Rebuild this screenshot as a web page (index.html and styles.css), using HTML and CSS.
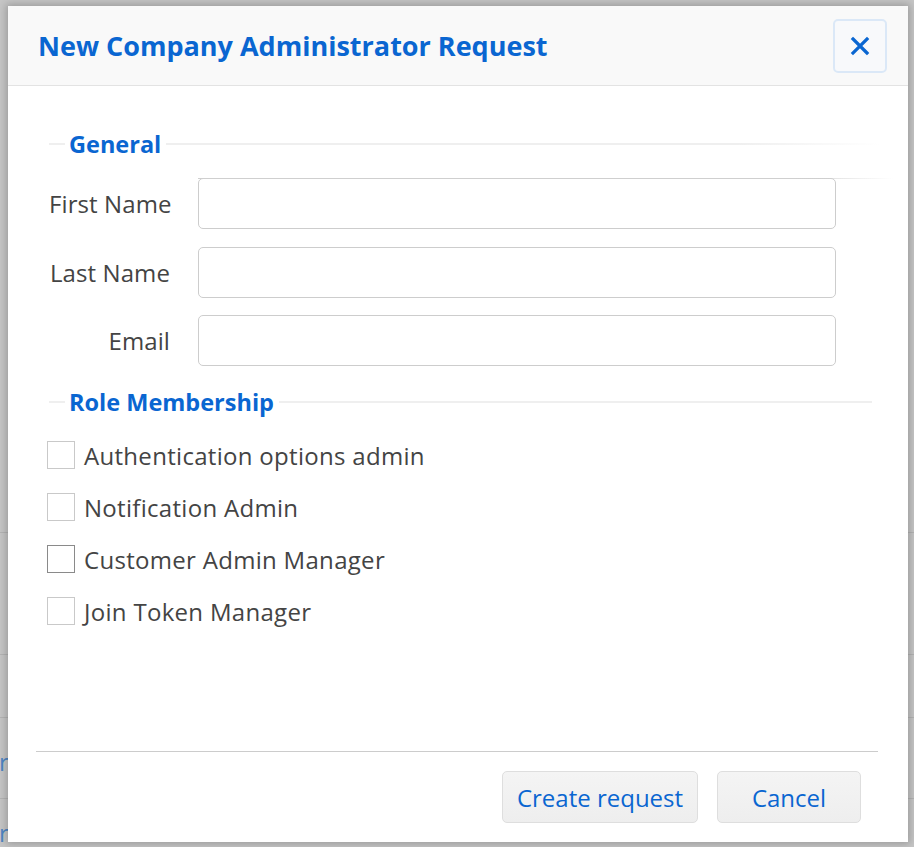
FILE: index.html
```html
<!DOCTYPE html>
<html lang="en">
<head>
<meta charset="utf-8">
<title>New Company Administrator Request</title>
<link rel="stylesheet" href="styles.css">
</head>
<body>
<div class="page">
  <div class="page-row r1"></div>
  <div class="page-row r2"></div>
  <div class="page-row r3"></div>
  <div class="page-row r4"><span class="page-link">r</span></div>
  <div class="page-row r5"><span class="page-link">r</span></div>
</div>

<div class="modal" role="dialog" aria-labelledby="modal-title">
  <div class="modal-header">
    <h1 id="modal-title" class="modal-title">New Company Administrator Request</h1>
    <button class="close-btn" aria-label="Close">
      <svg width="20" height="20" viewBox="0 0 20 20"><path d="M3 3 L17 17 M17 3 L3 17" stroke="#0a66d1" stroke-width="3.2" stroke-linecap="square" fill="none"/></svg>
    </button>
  </div>

  <div class="modal-body">
    <div class="legend legend-general"><span class="legend-text">General</span></div>

    <div class="form-rows">
      <div class="form-row first">
        <label class="form-label" for="fn">First Name</label>
        <input class="form-input" id="fn" type="text">
      </div>
      <div class="form-row">
        <label class="form-label" for="ln">Last Name</label>
        <input class="form-input" id="ln" type="text">
      </div>
      <div class="form-row">
        <label class="form-label" for="em">Email</label>
        <input class="form-input" id="em" type="text">
      </div>
    </div>

    <div class="legend legend-role"><span class="legend-text">Role Membership</span></div>

    <div class="checks">
      <label class="check-row"><span class="box"></span><span class="check-text">Authentication options admin</span></label>
      <label class="check-row"><span class="box"></span><span class="check-text">Notification Admin</span></label>
      <label class="check-row"><span class="box dark"></span><span class="check-text">Customer Admin Manager</span></label>
      <label class="check-row"><span class="box"></span><span class="check-text">Join Token Manager</span></label>
    </div>
  </div>

  <div class="modal-footer">
    <button class="btn btn-create">Create request</button>
    <button class="btn btn-cancel">Cancel</button>
  </div>
</div>
</body>
</html>
```

FILE: styles.css
```css
* { box-sizing: border-box; }

html, body {
  margin: 0;
  padding: 0;
  height: 100%;
}

body {
  background: #c6c6c6;
  font-family: "Open Sans", "Noto Sans", sans-serif;
  overflow: hidden;
}

.page {
  position: relative;
  height: 100%;
}

.page-row {
  border-bottom: 1px solid #b4b4b4;
}
.r1 { height: 533px; }
.r2 { height: 122px; }
.r3 { height: 63px; }
.r4 { height: 81px; }
.r5 { height: 48px; border-bottom: none; }

.page-link {
  display: block;
  margin-left: -1px;
  padding-top: 35px;
  color: #4f86c4;
  font-size: 24px;
  line-height: 18px;
}
.r5 .page-link { padding-top: 25px; }

.modal {
  position: absolute;
  left: 8px;
  top: 6px;
  width: 900px;
  height: 836px;
  background: #fff;
  box-shadow: 0 0 8px 2px rgba(0, 0, 0, 0.22);
  display: flex;
  flex-direction: column;
}

.modal-header {
  height: 80px;
  flex: none;
  background: #f9f9f9;
  border-bottom: 1px solid #e3e3e3;
  display: flex;
  align-items: center;
  justify-content: space-between;
  padding: 0 21px 0 30px;
}

.modal-title {
  margin: 0;
  font-size: 27px;
  font-weight: 700;
  color: #0a66d1;
}

.close-btn {
  width: 54px;
  height: 54px;
  border: 2px solid #dbe8f7;
  border-radius: 5px;
  background: #f8f9fb;
  display: flex;
  align-items: center;
  justify-content: center;
  padding: 0;
  margin-top: 1px;
}

.modal-body {
  flex: 1;
  padding: 42px 28px 0 41px;
}

.legend {
  display: flex;
  align-items: center;
  height: 32px;
}
.legend::before {
  content: "";
  width: 16px;
  height: 2px;
  background: #efefef;
}
.legend::after {
  content: "";
  flex: 1;
  height: 2px;
  background: #efefef;
}
.legend-general::after {
  background: linear-gradient(to right, #efefef 80%, rgba(239,239,239,0));
}
.legend-text {
  padding: 0 5px 0 4px;
  font-size: 23.5px;
  font-weight: 700;
  color: #0a66d1;
}

.form-rows {
  margin-top: 18px;
  display: flex;
  flex-direction: column;
  gap: 17.5px;
}

.form-row {
  display: flex;
  align-items: center;
  gap: 28px;
  position: relative;
}

.form-row.first::after {
  content: "";
  position: absolute;
  left: 149px;
  right: -13px;
  top: 0;
  height: 1px;
  background: linear-gradient(to right, #cfcfcf 85%, rgba(207,207,207,0));
}

.form-label {
  width: 121px;
  flex: none;
  text-align: right;
  font-size: 24px;
  letter-spacing: 0.1px;
  color: #444;
  white-space: nowrap;
}

.form-input {
  width: 638px;
  height: 51px;
  border: 1px solid #cdcdcd;
  border-radius: 5px;
  background: #fff;
  font-size: 20px;
  padding: 0 10px;
  font-family: inherit;
}

.legend-role {
  margin-top: 20px;
  margin-right: 8px;
}

.checks {
  margin: 11px 0 0 -2px;
}

.check-row {
  display: flex;
  align-items: center;
  height: 52px;
  gap: 9px;
}

.box {
  width: 28px;
  height: 28px;
  border: 1px solid #c9c9c9;
  background: #fff;
  flex: none;
}
.box.dark { border-color: #8a8a8a; }

.check-text {
  font-size: 24px;
  letter-spacing: 0.3px;
  color: #444;
}

.modal-footer {
  flex: none;
  margin: 0 30px 0 28px;
  border-top: 1px solid #cccccc;
  padding: 19px 17px 19px 0;
  display: flex;
  justify-content: flex-end;
  gap: 19px;
}

.btn {
  height: 52px;
  border: 1px solid #dedede;
  border-radius: 5px;
  background: linear-gradient(#f4f4f4, #eeeeee);
  color: #0a66d1;
  font-family: inherit;
  font-size: 24px;
  padding: 0;
}
.btn-create { width: 196px; }
.btn-cancel { width: 144px; }
```
